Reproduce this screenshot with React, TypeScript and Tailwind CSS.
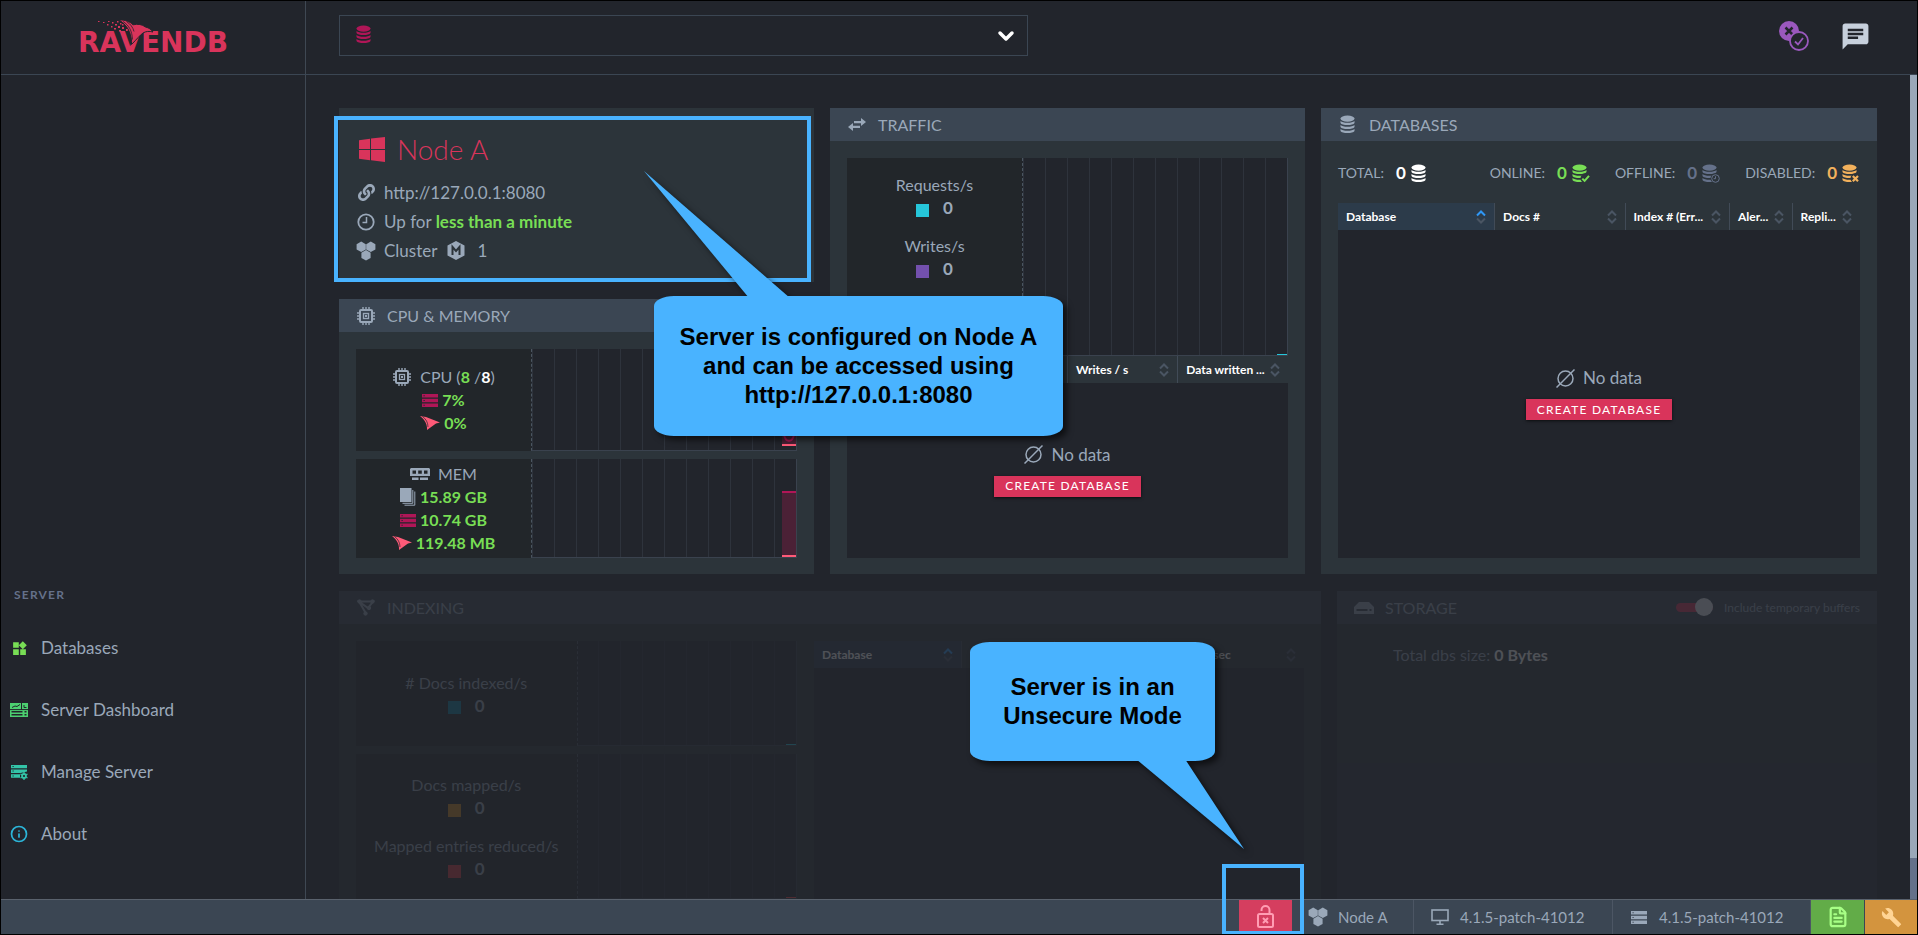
import type { ReactNode } from "react";
import clsx from "clsx";
import { FaLink } from "react-icons/fa";
import { MdBuild, MdChat, MdWidgets } from "react-icons/md";
import { ChevronDown, FileText, Info } from "lucide-react";

type IconProps = { className?: string };

const DatabaseIcon = ({ className, badge }: IconProps & { badge?: "check" | "clock" | "cross" }) => (
  <svg viewBox="0 0 19 19" className={clsx("h-[19px] w-[19px] shrink-0", className)} fill="currentColor" aria-hidden="true">
    <ellipse cx="8.500" cy="3.600" rx="7" ry="3.100" />
    {[0, 4, 8].map((y) => (
      <path
        key={y}
        transform={`translate(0 ${y})`}
        d="M1.500 5.900c1.200 1.200 3.800 1.800 7 1.800s5.800-.6 7-1.800v2c-.8 1.300-3.600 2.100-7 2.100s-6.200-.8-7-2.100z"
      />
    ))}
    {badge && <circle cx="14.500" cy="14.500" r="5" fill="#2c343a" />}
    {badge === "check" && <path d="M11.300 14.600l2.300 2.300 4.400-5" fill="none" stroke="currentColor" strokeWidth="2" />}
    {badge === "cross" && <path d="M11.800 12l5.200 5.200M17 12l-5.200 5.200" fill="none" stroke="currentColor" strokeWidth="2.200" />}
    {badge === "clock" && (
      <g fill="none" stroke="currentColor">
        <circle cx="14.500" cy="14.500" r="3.800" />
        <path d="M14.500 12.300v2.400h-1.800" />
      </g>
    )}
  </svg>
);

const CpuIcon = ({ className }: IconProps) => (
  <svg viewBox="0 0 20 20" className={clsx("h-5 w-5 shrink-0", className)} fill="none" stroke="currentColor" aria-hidden="true">
    <rect x="4" y="4" width="12" height="12" rx="1" strokeWidth="2" />
    <rect x="7.500" y="7.500" width="5" height="5" strokeWidth="1.300" />
    <rect x="9.500" y="9.500" width="1" height="1" />
    <path d="M7 1v3M10 1v3M13 1v3M7 16v3M10 16v3M13 16v3M1 7h3M1 10h3M1 13h3M16 7h3M16 10h3M16 13h3" strokeWidth="1.400" />
  </svg>
);

const MemIcon = () => (
  <svg viewBox="0 0 20 12" className="h-3 w-5 shrink-0" fill="currentColor" aria-hidden="true">
    <path fillRule="evenodd" d="M1 0h18l1 1v7H0V1zM2.500 2.500v3.200h3.500V2.500zM8.200 2.500v3.200h3.600V2.500zM14 2.500v3.200h3.500V2.500z" />
    <path d="M2 9.500h6.500V12H2zM10 9.500h8V12h-8z" />
  </svg>
);

const ServersIcon = ({ className }: IconProps) => (
  <svg viewBox="0 0 16 13" className={clsx("h-[13px] w-4 shrink-0", className)} fill="currentColor" fillRule="evenodd" aria-hidden="true">
    <path d="M0 0h16v3.500H0zM1.500 1.200v1h1.200v-1zM0 4.700h16v3.500H0zM1.500 5.900v1h1.200v-1zM0 9.400h16V13H0zM1.500 10.700v1h1.200v-1z" />
  </svg>
);

const RavenIcon = () => (
  <svg viewBox="0 0 20 14" className="h-[14px] w-5 shrink-0" fill="currentColor" aria-hidden="true">
    <path d="M0 0l6 1 14 5.500-4 1L7 14C7.500 9 5 3.500 0 0z" />
    <path d="M2.500.5C6 3 8 6.500 8 11" stroke="#25282c" strokeWidth=".7" fill="none" />
  </svg>
);

const PagesIcon = () => (
  <svg viewBox="0 0 16 18" className="h-[18px] w-4 shrink-0" fill="currentColor" aria-hidden="true">
    <rect x="0" y="0" width="11.500" height="14" />
    <path d="M12.800 2v13.300H2.500M14.800 3.500v13.700H4.500" stroke="currentColor" fill="none" />
  </svg>
);

const WindowsIcon = () => (
  <svg viewBox="0 0 26 25" className="h-[25px] w-[26px] shrink-0" fill="currentColor" aria-hidden="true">
    <path d="M0 3.300L11 1.800v10.200H0zM12 1.600L26 0v12H12zM0 13h11v10.200L0 21.800zM12 13h14v12l-14-1.700z" />
  </svg>
);

const ClockIcon = () => (
  <svg viewBox="0 0 18 18" className="size-[18px]" fill="none" stroke="currentColor" aria-hidden="true">
    <circle cx="9" cy="9" r="7.700" strokeWidth="1.800" />
    <path d="M9.500 4v5.500H5.500" strokeWidth="1.500" />
  </svg>
);

const ClusterIcon = ({ className }: IconProps) => (
  <svg viewBox="0 0 20 20" className={clsx("size-5 shrink-0", className)} fill="currentColor" aria-hidden="true">
    {["translate(5.200 5.800)", "translate(14.800 5.800)", "translate(10 14.300)"].map((t) => (
      <path key={t} transform={t} d="M0-5.200l4.600 2.600v5.200L0 5.200l-4.600-2.600v-5.200z" />
    ))}
  </svg>
);

const MemberIcon = () => (
  <svg viewBox="0 0 18 19" className="h-[19px] w-[18px]" fill="currentColor" aria-hidden="true">
    <path d="M9 0l8.500 4.500v10L9 19 .5 14.500v-10z" />
    <path d="M5.500 14V6l3.500 4 3.500-4v8" fill="none" stroke="#2c343a" strokeWidth="2" />
  </svg>
);

const TrafficIcon = () => (
  <svg viewBox="0 0 18 13" className="h-[13px] w-[18px]" fill="currentColor" aria-hidden="true">
    <path d="M13 0l5 4-5 4V5.200H6V3h7zM5 5v2.800h7V10H5v3L0 9z" />
  </svg>
);

const IndexIcon = () => (
  <svg viewBox="0 0 18 17" className="h-[17px] w-[18px]" fill="none" stroke="currentColor" strokeWidth="2" aria-hidden="true">
    <path d="M2 2.500h14l-5 6.500zM2 2.500l7 12" />
    <g fill="currentColor" strokeWidth="1">
      <circle cx="2.500" cy="2.500" r="1.700" />
      <circle cx="15.500" cy="2.500" r="1.700" />
      <circle cx="12" cy="9" r="1.700" />
      <circle cx="8.500" cy="14.500" r="1.700" />
    </g>
  </svg>
);

const StorageIcon = () => (
  <svg viewBox="0 0 20 12" className="h-3 w-5" fill="currentColor" fillRule="evenodd" aria-hidden="true">
    <path d="M5 0h10l5 5v7H0V5zM2.500 7v2h11V7zM15.500 7v2h2V7z" />
  </svg>
);

const EmptyIcon = () => (
  <svg viewBox="0 0 19 19" className="size-[19px]" fill="none" stroke="currentColor" strokeWidth="1.500" aria-hidden="true">
    <circle cx="9.500" cy="9.500" r="7.500" />
    <path d="M.5 18.500l18-18" />
  </svg>
);

const DashboardIcon = () => (
  <svg viewBox="0 0 18 14" className="h-[14px] w-[18px]" fill="currentColor" aria-hidden="true">
    <path fillRule="evenodd" d="M0 0h18v14H0zM1.500 8v1.500h11V8zM1.500 11v1.500h11V11zM14.500 8v1.500h2V8zM14.500 11v1.500h2V11z" />
    <path d="M2 4.500l3-1.500 2 .5 3-2M11.500 0v6.500M0 6.600h18M14 2v2.500h2.500" stroke="#22252c" fill="none" />
  </svg>
);

const ManageIcon = () => (
  <svg viewBox="0 0 17 16" className="h-4 w-[17px]" fill="currentColor" aria-hidden="true">
    <path fillRule="evenodd" d="M0 1h16v3.300H0zM1.500 2.100v1h1.200v-1zM0 5.500h16v2L9.500 9H0zM1.500 6.600v1h1.200v-1zM0 10.200h9v3.500H0zM1.500 11.500v1h1.200v-1z" />
    <circle cx="13" cy="12" r="2" fill="none" stroke="currentColor" strokeWidth="1.800" />
    <path d="M13 8v1.500M13 14.500V16M9.500 10l1.300.8M15.200 13.200l1.300.8M9.500 14l1.300-.8M15.200 10.800l1.300-.8" stroke="currentColor" strokeWidth="1.300" />
  </svg>
);

const MonitorIcon = () => (
  <svg viewBox="0 0 18 16" className="h-4 w-[18px]" fill="none" stroke="currentColor" aria-hidden="true">
    <rect x="1" y="1" width="16" height="10.500" strokeWidth="1.600" />
    <path d="M9 11.500V15M5.500 15.200h7" strokeWidth="1.600" />
  </svg>
);

const UnlockIcon = () => (
  <svg viewBox="0 0 17 23" className="h-[23px] w-[17px]" fill="none" stroke="currentColor" strokeWidth="2" aria-hidden="true">
    <rect x="1" y="9" width="15" height="13" rx="1.500" />
    <path d="M4.500 6V5a4 4 0 018 0v4M6 13l5 5M11 13l-5 5" />
  </svg>
);

const StatusIcon = () => (
  <svg viewBox="0 0 30 30" className="size-[30px]" fill="none" aria-hidden="true">
    <circle cx="10" cy="10" r="10" fill="#9a58bd" />
    <path d="M6.500 6.500l7 7M13.500 6.500l-7 7" stroke="#22252c" strokeWidth="2.500" />
    <circle cx="20" cy="20" r="9" fill="#22252c" stroke="#9a58bd" strokeWidth="1.800" />
    <path d="M16 20.500l3 3 5-6.500" stroke="#9a58bd" strokeWidth="1.800" />
  </svg>
);

const SortIcon = ({ active }: { active?: boolean }) => (
  <svg viewBox="0 0 10 14" className="h-[14px] w-[10px] shrink-0" fill="none" stroke="#4a5563" strokeWidth="2" aria-hidden="true">
    <path d="M1 5.500l4-4 4 4" stroke={active ? "#2f97f5" : "#4a5563"} />
    <path d="M1 8.500l4 4 4-4" />
  </svg>
);

const Logo = () => (
  <a href="#home" aria-label="RavenDB" className="relative block text-[#d9345b]">
    <span className="block font-['DejaVu_Sans'] text-[28px] leading-8 font-bold">RAVENDB</span>
    <svg viewBox="0 0 60 26" className="absolute -top-[7px] left-5 h-[26px] w-[60px]" aria-hidden="true">
      <path
        d="M21 0c6-.4 11 1.500 14 4.800 5-1 9-.5 12.500 2.200 3.500.8 5.700 2.500 7.500 5-4-1-7-.8-10 1-3.500 2.500-6 6-11.500 11.500C34 16 31 6 21 0z"
        fill="currentColor"
        stroke="#22252c"
        strokeWidth="1"
      />
      <path d="M25 1.500c6 4 9 9 9.500 18M28.500 1.500c4 2.500 6.500 6 7.500 10" stroke="#22252c" strokeWidth=".8" fill="none" />
      <path
        d="M0 1h1.500v1H0zM5 2h1.500v1H5zM10 1h1.500v1H10zM9 4h1.500v1.500H9zM14 2h1.500v1.500H14zM13 6h1.500v1.500H13zM17 4h2v1.500h-2zM16 8h2v1.500h-2zM19 1h1.500v1.500H19zM20 6h2v2h-2zM22 3h1.500v1.500H22zM21 10h2v1.500h-2zM24 7h2v2h-2zM25 11h1.800v2H25zM28 9h1.800v2H28zM24 4h1.500v1.500H24z"
        fill="currentColor"
      />
    </svg>
  </a>
);

type CardProps = { title: string; icon: ReactNode; extra?: ReactNode; className?: string; children: ReactNode };

const Card = ({ title, icon, extra, className, children }: CardProps) => (
  <section className={clsx("flex flex-col bg-[#2c343a]", className)}>
    <header className="flex h-[33px] items-center bg-[#3b4653] px-[17px]">
      <span className="mr-[11px] flex w-5 justify-center">{icon}</span>
      <h2 className="text-base">{title}</h2>
      {extra}
    </header>
    <div className="flex flex-1 flex-col px-[17px] pt-[17px] pb-4 text-base">{children}</div>
  </section>
);

const Chart = ({ children }: { children?: ReactNode }) => (
  <div className="relative flex-1 border-r border-b border-l border-[#3a424e] border-l-[#4a5560] bg-[#22252c] bg-[repeating-linear-gradient(to_left,transparent_0_21px,#2e333c_21px_22px)] [border-left-style:dashed]">
    {children}
  </div>
);

const Metric = ({ label, color }: { label: string; color: string }) => (
  <div className="text-center">
    <div className="leading-6">{label}</div>
    <div className="flex h-[22px] items-center justify-center gap-[14px]">
      <span className={clsx("mt-1 size-[13px]", color)} />
      <span className="text-[17px] leading-5 font-bold">0</span>
    </div>
  </div>
);

type Column = { label?: string; width: string };

const DataTable = ({ columns, sorted }: { columns: Column[]; sorted?: boolean }) => (
  <table className="w-full table-fixed bg-[#2c343a] text-white">
    <thead>
      <tr>
        {columns.map((column, i) => (
          <th
            key={i}
            scope="col"
            className={clsx(
              "h-[27px] border-[#414b57] p-0 text-left text-xs font-bold whitespace-nowrap",
              column.width,
              i < columns.length - 1 && "border-r",
              sorted && i === 0 && "bg-[#2c3b4a]",
            )}
          >
            <button type="button" aria-label={column.label ?? "Sort"} className="flex w-full items-center justify-between px-2">
              <span>{column.label}</span>
              <SortIcon active={sorted && i === 0} />
            </button>
          </th>
        ))}
      </tr>
    </thead>
  </table>
);

const NoData = () => (
  <div className="flex flex-1 flex-col items-center justify-center bg-[#22252c]">
    <div className="flex items-center gap-2 text-[17px] leading-5">
      <EmptyIcon />
      No data
    </div>
    <button
      type="button"
      className="mt-[11px] h-[21px] bg-[#d9345b] px-[11px] text-xs tracking-widest text-white uppercase shadow-sm shadow-black/50"
    >
      Create database
    </button>
  </div>
);

const Stat = ({ label, color, badge }: { label: string; color: string; badge?: "check" | "clock" | "cross" }) => (
  <div className="flex items-center text-sm leading-6">
    {label}:
    <span className={clsx("ml-3 flex items-center gap-1 text-[17px] font-bold", color)}>
      0 <DatabaseIcon badge={badge} />
    </span>
  </div>
);

const Callout = ({ className, tail, children }: { className: string; tail: ReactNode; children: ReactNode }) => (
  <aside
    className={clsx(
      "absolute z-10 text-center font-['Liberation_Sans',Arial,sans-serif] text-2xl leading-[29px] font-bold text-black drop-shadow-[4px_4px_3px_rgba(0,0,0,0.600)]",
      className,
    )}
  >
    {tail}
    <p className="flex size-full items-center justify-center rounded-[20px/10px] bg-[#49b3ff] pb-px">{children}</p>
  </aside>
);

const NodeCard = () => (
  <section className="relative bg-[#2c343a] px-[17px] pt-6 pb-[17px]">
    <h1 className="flex h-[34px] items-center gap-3 pl-[3px] text-[28px] font-light text-[#d9345b]">
      <WindowsIcon />
      Node A
    </h1>
    <ul className="mt-3">
      <li className="flex h-[29px] items-center gap-2">
        <span className="flex w-5 justify-center">
          <FaLink className="size-[17px]" />
        </span>
        http://127.0.0.1:8080
      </li>
      <li className="flex h-[29px] items-center gap-2">
        <span className="flex w-5 justify-center">
          <ClockIcon />
        </span>
        <span>
          Up for <b className="font-bold text-[#78de55]">less than a minute</b>
        </span>
      </li>
      <li className="flex h-[29px] items-center gap-2">
        <ClusterIcon />
        <span className="mr-0.5">Cluster</span>
        <MemberIcon />
        <span className="ml-1">1</span>
      </li>
    </ul>
    <div className="absolute top-2 right-[3px] bottom-0 -left-[5px] border-4 border-[#49b3ff]" />
  </section>
);

const Usage = ({ icon, value }: { icon: ReactNode; value: string }) => (
  <div className="flex h-[23px] items-center gap-1 font-bold text-[#78de55]">
    {icon}
    {value}
  </div>
);

const CpuMemory = () => (
  <Card title="CPU & MEMORY" icon={<CpuIcon />}>
    <div className="flex h-[102px]">
      <div className="flex w-[175px] flex-col items-center justify-center bg-[#22262a]">
        <div className="flex h-[23px] items-center gap-2">
          <CpuIcon />
          <span>
            CPU (<b className="text-[#78de55]">8</b> /<b className="text-white">8</b>)
          </span>
        </div>
        <Usage icon={<ServersIcon className="text-[#b01657]" />} value="7%" />
        <Usage icon={<span className="text-[#ff5a78]"><RavenIcon /></span>} value="0%" />
      </div>
      <Chart>
        <div className="absolute right-0 bottom-1 h-10 w-[14px] border-t-2 border-b-2 border-t-[#b01657] border-b-[#ff5a78] bg-[#4b2136]">
          <svg viewBox="0 0 14 10" className="absolute bottom-0 h-[10px] w-[14px]" aria-hidden="true">
            <path d="M2 0c1 9 9 9 10 0" fill="none" stroke="#b01657" strokeWidth="2" />
          </svg>
        </div>
      </Chart>
    </div>
    <div className="mt-2 flex h-[99px]">
      <div className="flex w-[175px] flex-col items-center justify-center bg-[#22262a]">
        <div className="flex h-[23px] items-center gap-2">
          <MemIcon />
          MEM
        </div>
        <Usage icon={<span className="text-[#9aa8b9]"><PagesIcon /></span>} value="15.89 GB" />
        <Usage icon={<ServersIcon className="text-[#b01657]" />} value="10.74 GB" />
        <Usage icon={<span className="text-[#ff5a78]"><RavenIcon /></span>} value="119.48 MB" />
      </div>
      <Chart>
        <div className="absolute right-0 bottom-0 h-[66px] w-[14px] border-t-2 border-b-2 border-t-[#b01657] border-b-[#ff5a78] bg-[#4b2136]" />
      </Chart>
    </div>
  </Card>
);

const Traffic = () => (
  <Card title="TRAFFIC" icon={<TrafficIcon />}>
    <div className="flex h-[198px]">
      <div className="flex w-[175px] flex-col gap-[15px] bg-[#22262a] pt-[15px]">
        <Metric label="Requests/s" color="bg-[#26c6da]" />
        <Metric label="Writes/s" color="bg-[#7350ad]" />
      </div>
      <Chart>
        <span className="absolute right-0 bottom-0 h-px w-[10px] bg-[#26c6da]" />
      </Chart>
    </div>
    <DataTable
      columns={[{ width: "w-1/4" }, { width: "w-1/4" }, { label: "Writes / s", width: "w-1/4" }, { label: "Data written ...", width: "w-1/4" }]}
    />
    <NoData />
  </Card>
);

const Databases = () => (
  <Card title="DATABASES" icon={<DatabaseIcon />}>
    <div className="flex h-[45px] items-start justify-between pt-[3px]">
      <Stat label="TOTAL" color="text-white" />
      <div className="flex gap-[25px]">
        <Stat label="ONLINE" color="text-[#78de55]" badge="check" />
        <Stat label="OFFLINE" color="text-[#65718a]" badge="clock" />
        <Stat label="DISABLED" color="text-[#f2b15c]" badge="cross" />
      </div>
    </div>
    <DataTable
      sorted
      columns={[
        { label: "Database", width: "w-[30%]" },
        { label: "Docs #", width: "w-1/4" },
        { label: "Index # (Err...", width: "w-1/5" },
        { label: "Aler...", width: "w-[12%]" },
        { label: "Repli...", width: "w-[13%]" },
      ]}
    />
    <NoData />
  </Card>
);

const Indexing = () => (
  <Card title="INDEXING" icon={<IndexIcon />} className="opacity-20">
    <div className="flex flex-1 gap-[17px]">
      <div className="flex flex-[441] flex-col gap-2">
        <div className="flex h-[105px]">
          <div className="flex w-1/2 flex-col justify-center bg-[#22262a]">
            <Metric label="# Docs indexed/s" color="bg-[#0e7fa0]" />
          </div>
          <Chart>
            <span className="absolute right-0 bottom-0 h-px w-[10px] bg-[#26c6da]" />
          </Chart>
        </div>
        <div className="flex h-[145px]">
          <div className="flex w-1/2 flex-col justify-center gap-[15px] bg-[#22262a]">
            <Metric label="Docs mapped/s" color="bg-[#d08a20]" />
            <Metric label="Mapped entries reduced/s" color="bg-[#d93a40]" />
          </div>
          <Chart>
            <span className="absolute right-0 bottom-0 h-px w-[10px] bg-[#ff4a4a]" />
          </Chart>
        </div>
      </div>
      <div className="flex flex-[490] flex-col bg-[#22252c]">
        <DataTable
          sorted
          columns={[{ label: "Database", width: "w-[30%]" }, { width: "w-[19%]" }, { width: "w-[19%]" }, { label: "Reduced / sec", width: "w-[32%]" }]}
        />
      </div>
    </div>
  </Card>
);

const Storage = () => (
  <Card
    title="STORAGE"
    icon={<StorageIcon />}
    className="opacity-20"
    extra={
      <label className="ml-auto flex items-center gap-[11px] text-xs">
        <input
          type="checkbox"
          defaultChecked
          className="relative h-[9px] w-[37px] appearance-none rounded-full bg-[#d9345b] before:absolute before:right-0 before:-bottom-1 before:size-[18px] before:rounded-full before:bg-[#e8ecf2]"
        />
        Include temporary buffers
      </label>
    }
  >
    <p className="pl-[39px] leading-7">
      Total dbs size: <b className="text-white">0 Bytes</b>
    </p>
  </Card>
);

const menu = [
  { label: "Databases", href: "#databases", color: "text-[#78de55]", icon: <MdWidgets className="size-[17px]" /> },
  { label: "Server Dashboard", href: "#dashboard", color: "text-[#4cd070]", icon: <DashboardIcon /> },
  { label: "Manage Server", href: "#manage", color: "text-[#33c4a8]", icon: <ManageIcon /> },
  { label: "About", href: "#about", color: "text-[#2cb5d8]", icon: <Info className="size-[18px]" strokeWidth={2.3} /> },
];

const Sidebar = () => (
  <nav className="flex w-[305px] shrink-0 flex-col justify-end border-r border-[#3f4853] pb-[34px]">
    <h2 className="mb-3 pl-[13px] text-xs leading-5 font-bold tracking-widest text-[#65718a]">SERVER</h2>
    {menu.map((item) => (
      <a key={item.label} href={item.href} className="flex h-[62px] items-center gap-3 pl-2">
        <span className={clsx("flex w-5 justify-center", item.color)}>{item.icon}</span>
        {item.label}
      </a>
    ))}
  </nav>
);

const TopBar = () => (
  <header className="flex h-[74px] shrink-0 border-b border-[#3b4653]">
    <div className="flex w-[305px] shrink-0 items-center justify-center border-r border-[#3f4853] pt-[10px]">
      <Logo />
    </div>
    <div className="flex flex-1 items-center pr-[46px] pl-[33px]">
      <div className="relative mb-[5px] h-[41px] w-[689px]">
        <select aria-label="Active database" className="size-full appearance-none border border-[#3b4653] bg-transparent pl-12">
          <option value="" />
        </select>
        <DatabaseIcon className="pointer-events-none absolute top-[10px] left-4 text-[#b01657]" />
        <ChevronDown className="pointer-events-none absolute top-[9px] right-[10px] size-6 text-white" strokeWidth={3.500} />
      </div>
      <div className="mb-1 ml-auto flex items-center gap-[31px]">
        <button type="button" aria-label="Certificate status">
          <StatusIcon />
        </button>
        <button type="button" aria-label="Notifications" className="pt-0.5 text-[#c7d0dc]">
          <MdChat className="size-[31px]" />
        </button>
      </div>
    </div>
  </header>
);

const Footer = () => (
  <footer className="flex h-[35px] shrink-0 justify-end border-t border-[#5a626d] bg-[#3b4653]">
    <div className="relative mr-3">
      <button type="button" aria-label="Unsecure mode" className="flex h-8 w-[53px] items-center justify-center bg-[#d53e5f] text-[#ff9db3]">
        <UnlockIcon />
      </button>
      <div className="absolute -top-9 -right-3 -bottom-px -left-[17px] border-4 border-[#49b3ff]" />
    </div>
    <div className="flex w-[110px] items-center gap-[10px] border-r border-[#4c5664] pl-1 text-[15px]">
      <ClusterIcon />
      Node A
    </div>
    <div className="flex w-[199px] items-center gap-[11px] border-r border-[#4c5664] pl-[17px] text-[15px]">
      <MonitorIcon />
      4.1.5-patch-41012
    </div>
    <div className="flex w-[198px] items-center gap-3 border-r border-[#4c5664] pl-[18px] text-[15px]">
      <ServersIcon />
      4.1.5-patch-41012
    </div>
    <button type="button" aria-label="Documentation" className="flex w-[53px] items-center justify-center bg-[#62ac48] text-[#a8ff86]">
      <FileText className="size-[22px]" strokeWidth={2.400} />
    </button>
    <button type="button" aria-label="Settings" className="ml-px flex w-[52px] items-center justify-center bg-[#d3943e] text-[#ffd494]">
      <MdBuild className="size-[21px]" />
    </button>
  </footer>
);

const App = () => {
  return (
    <div className="relative flex h-screen flex-col overflow-hidden border border-black bg-[#22252c] font-['Lato',sans-serif] text-[17px] text-[#9aa8b9]">
      <TopBar />
      <div className="flex min-h-0 flex-1">
        <Sidebar />
        <main className="relative flex-1 overflow-hidden px-[33px] pt-[33px]">
          <div className="grid grid-cols-[475fr_475fr_556fr] gap-4">
            <div className="flex flex-col gap-[17px]">
              <NodeCard />
              <CpuMemory />
            </div>
            <Traffic />
            <Databases />
          </div>
          <div className="mt-[17px] grid min-h-[340px] grid-cols-[982fr_540fr] gap-4">
            <Indexing />
            <Storage />
          </div>
          <Callout
            className="top-[221px] left-[348px] h-[140px] w-[409px]"
            tail={
              <svg viewBox="0 0 146 127" className="absolute -top-[125px] -left-[10px] h-[127px] w-[146px]" aria-hidden="true">
                <path d="M0 0l105 127h41z" fill="#49b3ff" />
              </svg>
            }
          >
            <span>
              Server is configured on Node A
              <br />
              and can be accessed using
              <br />
              http://127.0.0.1:8080
            </span>
          </Callout>
        </main>
        <div className="w-[7px] shrink-0 bg-[#65718a]">
          <div className="h-[95%] bg-[#9aa8b9]" />
        </div>
      </div>
      <Footer />
      <Callout
        className="right-[702px] bottom-[173px] h-[119px] w-[245px]"
        tail={
          <svg viewBox="0 0 108 90" className="absolute top-[117px] left-[166px] h-[90px] w-[108px]" aria-hidden="true">
            <path d="M0 0h49l59 90z" fill="#49b3ff" />
          </svg>
        }
      >
        <span>
          Server is in an
          <br />
          Unsecure Mode
        </span>
      </Callout>
    </div>
  );
};

export default App;
